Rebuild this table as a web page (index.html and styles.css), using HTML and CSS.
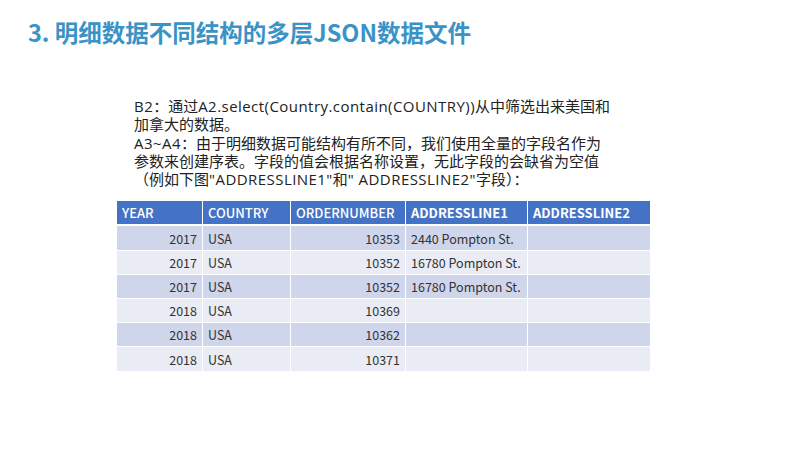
FILE: index.html
```html
<!DOCTYPE html>
<html>
<head>
<meta charset="utf-8">
<link rel="stylesheet" href="styles.css">
</head>
<body>
<div class="slide">
  <h1 class="title">3. 明细数据不同结构的多层JSON数据文件</h1>
  <div class="desc">
    <p><span class="lat">B2</span>：通过<span class="lat">A2.select(Country.contain(COUNTRY))</span>从中筛选出来美国和<br>加拿大的数据。</p>
    <p><span class="lat">A3~A4</span>：由于明细数据可能结构有所不同，我们使用全量的字段名作为<br>参数来创建序表。字段的值会根据名称设置，无此字段的会缺省为空值<br>（例如下图<span class="lat">"ADDRESSLINE1"</span>和<span class="lat">" ADDRESSLINE2"</span>字段）：</p>
  </div>
  <table class="grid">
    <colgroup>
      <col class="c1"><col class="c2"><col class="c3"><col class="c4"><col class="c5">
    </colgroup>
    <thead>
      <tr><th>YEAR</th><th>COUNTRY</th><th>ORDERNUMBER</th><th class="b">ADDRESSLINE1</th><th class="b">ADDRESSLINE2</th></tr>
    </thead>
    <tbody>
      <tr><td class="r">2017</td><td>USA</td><td class="r">10353</td><td>2440 Pompton St.</td><td></td></tr>
      <tr><td class="r">2017</td><td>USA</td><td class="r">10352</td><td>16780 Pompton St.</td><td></td></tr>
      <tr><td class="r">2017</td><td>USA</td><td class="r">10352</td><td>16780 Pompton St.</td><td></td></tr>
      <tr><td class="r">2018</td><td>USA</td><td class="r">10369</td><td></td><td></td></tr>
      <tr><td class="r">2018</td><td>USA</td><td class="r">10362</td><td></td><td></td></tr>
      <tr><td class="r">2018</td><td>USA</td><td class="r">10371</td><td></td><td></td></tr>
    </tbody>
  </table>
</div>
</body>
</html>
```
FILE: styles.css
```css
html, body {
  margin: 0;
  padding: 0;
  background: #ffffff;
}
.slide {
  width: 800px;
  height: 450px;
  position: relative;
  overflow: hidden;
  font-family: "Noto Sans CJK SC", "Noto Sans", sans-serif;
}
.title {
  margin: 0;
  padding: 16px 0 0 28px;
  font-size: 23.5px;
  line-height: 32px;
  font-weight: bold;
  color: #3a93c6;
}
.desc {
  margin: 49px 0 0 134px;
  font-family: "Open Sans", "Noto Sans CJK SC", sans-serif;
  font-size: 15px;
  line-height: 18.3px;
  color: #222222;
  white-space: nowrap;
}
.desc p {
  margin: 0;
}
.lat {
  letter-spacing: 0.45px;
}
.grid {
  margin: 12px 0 0 116px;
  border-collapse: separate;
  border-spacing: 1px 1px;
  font-size: 12.5px;
  table-layout: fixed;
  width: 535px;
}
.c1 { width: 85px; }
.c2 { width: 87px; }
.c3 { width: 114px; }
.c4 { width: 121px; }
.c5 { width: 122px; }
.grid th {
  background: #4472c4;
  color: #ffffff;
  font-weight: 500;
  text-align: left;
  height: 23px;
  padding: 0 5px;
  font-size: 13px;
  border-bottom: 1px solid #ffffff;
}
.grid th.b {
  font-weight: bold;
}
.grid td {
  height: 23.2px;
  padding: 0 5px;
  color: #333333;
  background: #cfd5ea;
}
.grid tbody tr:nth-child(even) td {
  background: #e9ebf5;
}
.grid td.r {
  text-align: right;
}
```
